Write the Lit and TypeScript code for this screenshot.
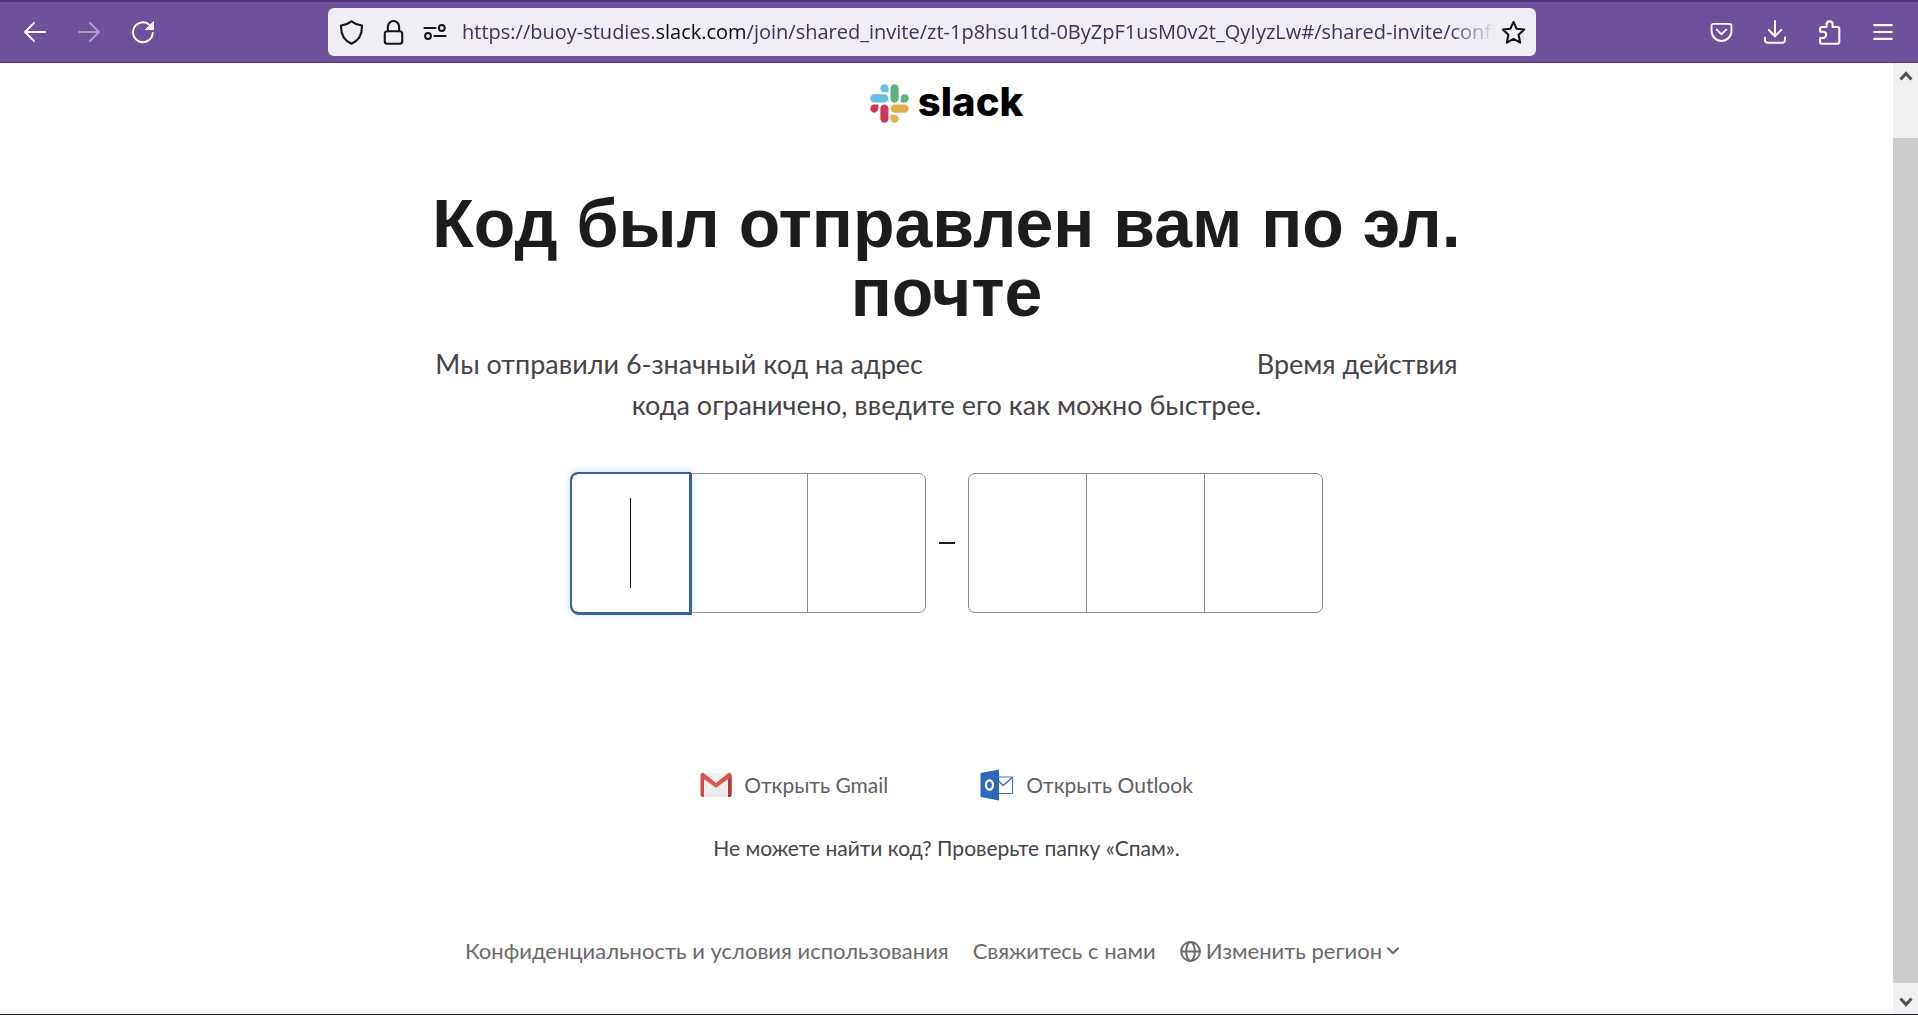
import { LitElement, html, css, svg } from "lit";
import { customElement } from "lit/decorators.js";

const icon = (size: number, body: unknown) => html`<svg
  width=${size}
  height=${size}
  viewBox="0 0 24 24"
  fill="none"
  stroke="currentColor"
  stroke-width="2"
  stroke-linecap="round"
  stroke-linejoin="round"
  aria-hidden="true"
>${body}</svg>`;

const icons = {
  back: svg`<path d="M22 12H2.500M11 3L2 12l9 9"/>`,
  forward: svg`<path d="M2 12h19.500M13 3l9 9-9 9"/>`,
  reload: svg`<path d="M21.800 13A9.900 9.900 0 1 1 18.600 4.900"/><path d="M22.500 2v7.500h-7.500z" fill="currentColor" stroke-width="1"/>`,
  shield: svg`<path d="M12 1.200C9.200 3.600 5.200 4.800 2 5.200C1.600 13 4.800 19.600 12 22.800C19.200 19.600 22.400 13 22 5.200C18.800 4.800 14.800 3.600 12 1.200z"/>`,
  lock: svg`<rect x="3.600" y="10.800" width="16.800" height="12" rx="2.400"/><path d="M6.600 10.800V6.400a5.400 5.400 0 0 1 10.800 0v4.400"/>`,
  sliders: svg`<path d="M1.500 8h11M11.500 16h11" stroke-width="2.200"/><circle cx="18.800" cy="8" r="2.900"/><circle cx="5" cy="16" r="2.900"/>`,
  star: svg`<path d="M12 1.800l3 6.600 7.300.8-5.400 5 1.500 7.600L12 18.200l-6.400 3.600 1.500-7.600-5.400-5 7.300-.8z"/>`,
  pocket: svg`<path d="M3.600 3h16.800a2 2 0 0 1 2 2v5.400a10.400 10.400 0 0 1-20.800 0V5a2 2 0 0 1 2-2z"/><path d="M7 9l5 4.800L17 9"/>`,
  download: svg`<path d="M12 1v15M5.800 10L12 16.200 18.200 10M2 17.500v2.700a2.500 2.500 0 0 0 2.500 2.500h15a2.500 2.500 0 0 0 2.500-2.500v-2.700"/>`,
  extension: svg`<path d="M3 11.200V8.300a1.600 1.600 0 0 1 1.600-1.600h4.600V4.200a2.900 2.900 0 0 1 5.800 0v2.500h4.800a1.600 1.600 0 0 1 1.600 1.600v12.900a1.600 1.600 0 0 1-1.600 1.600H4.600A1.600 1.600 0 0 1 3 21.200v-4h2.800a2.900 2.900 0 0 0 0-6z"/>`,
  menu: svg`<path d="M2.500 4.500h19M2.500 12h19M2.500 19.500h19" stroke-width="2.200"/>`,
};

@customElement("browser-toolbar")
class BrowserToolbar extends LitElement {
  static styles = css`
    :host { display: block; font-family: "Open Sans", "Noto Sans", sans-serif; }
    .bar {
      display: grid; grid-template-columns: minmax(0, 328fr) minmax(0, 1208fr) minmax(0, 382fr); align-items: center;
      height: 63px; box-sizing: border-box; color: #fff; background: #6d519b;
      border-top: 2px solid #4f3477; border-bottom: 1px solid #4f3a70;
    }
    .group { display: flex; align-items: center; gap: 22px; padding-left: 19px; }
    .end { justify-content: flex-end; padding: 0 19px 0 0; }
    button {
      display: flex; align-items: center; justify-content: center; width: 32px; height: 32px;
      padding: 0; border: 0; background: none; color: inherit;
    }
    button:disabled { opacity: 0.45; }
    .address {
      position: relative; display: flex; align-items: center; height: 48px;
      padding: 0 6px; border-radius: 6px; background: #f0edf5; color: #15141a;
    }
    .address button { flex: none; width: 34px; margin-right: 8px; }
    .address button:last-child { margin: 0; }
    .url {
      position: relative; flex: 1; min-width: 0; margin-left: 2px; overflow: hidden; white-space: nowrap;
      font-size: 20px; line-height: 34px; color: #3d3354;
      -webkit-mask-image: linear-gradient(to right, #000 calc(100% - 48px), transparent);
      mask-image: linear-gradient(to right, #000 calc(100% - 48px), transparent);
    }
    .domain { color: #0c0b12; }
    .url input { position: absolute; inset: 0; width: 100%; border: 0; outline: 0; background: transparent; font: inherit; }
  `;

  render() {
    return html`<nav class="bar" aria-label="Браузер">
      <div class="group">
        <button aria-label="Назад">${icon(24, icons.back)}</button>
        <button aria-label="Вперёд" disabled>${icon(24, icons.forward)}</button>
        <button aria-label="Обновить">${icon(24, icons.reload)}</button>
      </div>
      <div class="address">
        <button aria-label="Защита">${icon(25, icons.shield)}</button>
        <button aria-label="Соединение">${icon(25, icons.lock)}</button>
        <button aria-label="Разрешения">${icon(24, icons.sliders)}</button>
        <label class="url"><span>https://buoy-studies.</span><span class="domain">slack.com</span><span>/join/shared_invite/zt-1p8hsu1td-0ByZpF1usM0v2t_QyIyzLw#/shared-invite/confirm</span><input type="text" aria-label="Адрес" /></label>
        <button aria-label="Закладка">${icon(25, icons.star)}</button>
      </div>
      <div class="group end">
        <button aria-label="Pocket">${icon(23, icons.pocket)}</button>
        <button aria-label="Загрузки">${icon(24, icons.download)}</button>
        <button aria-label="Расширения">${icon(25, icons.extension)}</button>
        <button aria-label="Меню">${icon(22, icons.menu)}</button>
      </div>
    </nav>`;
  }
}

@customElement("code-input")
class CodeInput extends LitElement {
  static styles = css`
    :host { display: block; }
    .code { display: flex; justify-content: center; align-items: center; gap: 13px; margin: 0; padding: 0; border: 0; }
    .group {
      display: grid; grid-template-columns: repeat(3, 1fr); box-sizing: border-box; width: 355px;
      border: 1px solid #8a8a8d; border-radius: 7px;
    }
    .cell { position: relative; height: 138px; }
    .cell + .cell { border-left: 1px solid #8a8a8d; }
    input {
      display: block; box-sizing: border-box; width: 100%; height: 100%; padding: 0; border: 0; outline: 0;
      background: transparent; text-align: center; font: 60px "Lato", sans-serif; color: #1d1c1d; caret-color: transparent;
    }
    .active { z-index: 1; border-radius: 6px 0 0 6px; box-shadow: 0 0 0 2px #3a6292, 1px 1px 0 2px #3a6292, 0 0 10px 3px #d3e3fb; }
    .active::after {
      content: ""; position: absolute; left: 58px; top: 24px; bottom: 24px; width: 1px; background: #111; pointer-events: none;
    }
    .dash { width: 16px; height: 2px; background: #1d1c1d; }
  `;

  private cell(n: number) {
    return html`<div class=${n === 1 ? "cell active" : "cell"}>
      <input type="text" inputmode="numeric" maxlength="1" aria-label=${`Цифра ${n} из 6`} />
    </div>`;
  }

  render() {
    return html`<fieldset class="code" aria-label="Код подтверждения">
      <div class="group">${[1, 2, 3].map((n) => this.cell(n))}</div>
      <span class="dash"></span>
      <div class="group">${[4, 5, 6].map((n) => this.cell(n))}</div>
    </fieldset>`;
  }
}

@customElement("app-root")
class AppRoot extends LitElement {
  static styles = css`
    :host { display: block; font-family: "Lato", "Open Sans", sans-serif; color: #1d1c1d; }
    .window { display: flex; flex-direction: column; min-height: 100vh; box-sizing: border-box; border-bottom: 1px solid #1b1a1e; background: #fff; }
    .viewport { flex: 1; display: flex; }
    .page { flex: 1; min-width: 0; display: flex; flex-direction: column; align-items: center; padding: 21px 0 40px; box-sizing: border-box; }
    .logo { display: flex; align-items: flex-start; gap: 9px; height: 39px; color: #000; text-decoration: none; font: 800 40px/36px "Inter", sans-serif; }
    .intro { max-width: 1050px; margin-top: 66px; text-align: center; }
    h1 { margin: 0; font: bold 68px/69px "Liberation Sans", Arial, sans-serif; color: #1d1c1d; }
    .lead { margin: 16px 0 48px; font-size: 27px; line-height: 41px; color: #454447; }
    .recipient { display: inline-block; width: 320px; }
    .mail { display: flex; gap: 92px; margin-top: 156px; }
    .mail a { display: flex; align-items: center; gap: 12px; font-size: 21px; line-height: 30px; color: #616061; text-decoration: none; }
    .hint { margin: 32px 0 0; font-size: 21px; line-height: 30px; color: #454447; }
    .footer { display: flex; align-items: center; gap: 24px; margin-top: 73px; padding-right: 29px; font-size: 22px; line-height: 30px; }
    .footer a, .footer button { color: #696969; text-decoration: none; }
    .region { display: flex; align-items: center; gap: 5px; padding: 0; border: 0; background: none; font: inherit; }
    .scroll { width: 25px; display: flex; flex-direction: column; background: #f0f0f0; }
    .scroll button { display: flex; align-items: center; justify-content: center; height: 25px; padding: 0; border: 0; background: none; color: #505050; }
    .track { flex: 1; display: flex; flex-direction: column; padding-top: 50px; padding-bottom: 6px; }
    .thumb { flex: 1; background: #cdcdcd; }
  `;

  render() {
    return html`<div class="window">
      <browser-toolbar></browser-toolbar>
      <div class="viewport">
        <main class="page">
          <a class="logo" href="#">
            <svg width="39" height="39" viewBox="0 0 124 124" aria-hidden="true">
              <path fill="#c9385c" d="M26.400 78.200c0 7.100-5.800 12.900-12.900 12.900S.600 85.300.600 78.200s5.800-12.900 12.900-12.900h12.900zM32.900 78.200c0-7.100 5.800-12.900 12.900-12.900s12.900 5.800 12.900 12.900v32.300c0 7.100-5.800 12.900-12.900 12.900s-12.900-5.800-12.900-12.900z"/>
              <path fill="#67bee4" d="M45.800 26.400c-7.100 0-12.900-5.800-12.900-12.900S38.700.600 45.800.600s12.900 5.800 12.900 12.900v12.900zM45.800 32.900c7.100 0 12.900 5.800 12.900 12.900s-5.800 12.900-12.900 12.900H13.500C6.400 58.700.600 52.900.600 45.800s5.800-12.900 12.900-12.900z"/>
              <path fill="#5bb381" d="M97.600 45.800c0-7.100 5.800-12.900 12.900-12.900s12.900 5.800 12.900 12.900-5.800 12.900-12.900 12.900H97.600zM91.100 45.800c0 7.100-5.800 12.900-12.900 12.900s-12.900-5.800-12.900-12.900V13.500C65.300 6.400 71.100.600 78.200.600s12.900 5.800 12.900 12.900z"/>
              <path fill="#deb04c" d="M78.200 97.600c7.100 0 12.900 5.800 12.900 12.900s-5.800 12.900-12.900 12.900-12.900-5.800-12.900-12.900V97.600zM78.200 91.100c-7.100 0-12.900-5.800-12.900-12.900s5.800-12.900 12.900-12.900h32.300c7.100 0 12.900 5.800 12.900 12.900s-5.800 12.900-12.900 12.900z"/>
            </svg>
            <span>slack</span>
          </a>
          <div class="intro">
            <h1>Код был отправлен вам по эл. почте</h1>
            <p class="lead">Мы отправили 6-значный код на адрес <span class="recipient"></span> Время действия кода ограничено, введите его как можно быстрее.</p>
          </div>
          <code-input></code-input>
          <div class="mail">
            <a href="#">
              <svg width="32" height="30" viewBox="0 0 32 30" aria-hidden="true">
                <path d="M2 3h28v24H2z" fill="#f1f0f0"/>
                <path d="M4 7l12 10L28 7v20H4z" fill="#ededed"/>
                <path d="M.500 5v20a2 2 0 0 0 2 2H4V7zM31.500 5v20a2 2 0 0 1-2 2H28V7z" fill="#cf4b40"/>
                <path d="M28 7l3.500-2v20a2 2 0 0 1-2 2H28z" fill="#b63a31"/>
                <path d="M.500 5A2.200 2.200 0 0 1 4 3.300L16 13 28 3.300A2.200 2.200 0 0 1 31.500 5c0 1-.4 1.800-1.200 2.400L16 17.800 1.700 7.400C.9 6.800.5 6 .5 5z" fill="#dc5448"/>
              </svg>
              <span>Открыть Gmail</span>
            </a>
            <a href="#">
              <svg width="34" height="32" viewBox="0 0 34 32" aria-hidden="true">
                <path d="M18 8h14.500v16.500H18z" fill="#fff" stroke="#3f78bf" stroke-width="1.200"/>
                <path d="M18.500 12l4.700 4.500L32.200 8.500" fill="none" stroke="#3f78bf" stroke-width="1.500"/>
                <path d="M.500 4L19 .500v31L.500 28z" fill="#2d68bb"/>
                <ellipse cx="9.500" cy="16" rx="3.500" ry="4.700" fill="none" stroke="#fff" stroke-width="2.300"/>
              </svg>
              <span>Открыть Outlook</span>
            </a>
          </div>
          <p class="hint">Не можете найти код? Проверьте папку «Спам».</p>
          <footer class="footer">
            <a href="#">Конфиденциальность и условия использования</a>
            <a href="#">Свяжитесь с нами</a>
            <button class="region">
              <svg width="21" height="21" viewBox="0 0 21 21" fill="none" stroke="currentColor" stroke-width="2" aria-hidden="true">
                <circle cx="10.500" cy="10.500" r="9.400"/><ellipse cx="10.500" cy="10.500" rx="4.300" ry="9.400"/><path d="M1 10.500h19"/>
              </svg>
              <span>Изменить регион</span>
              <svg width="12" height="8" viewBox="0 0 12 8" fill="none" stroke="currentColor" stroke-width="2" stroke-linecap="round" stroke-linejoin="round" aria-hidden="true"><path d="M1 1.300l5 5 5-5"/></svg>
            </button>
          </footer>
        </main>
        <div class="scroll">
          <button aria-label="Прокрутить вверх"><svg width="14" height="10" viewBox="0 0 14 10" fill="none" stroke="currentColor" stroke-width="3" aria-hidden="true"><path d="M1.500 8.500L7 2.500l5.500 6"/></svg></button>
          <div class="track"><div class="thumb"></div></div>
          <button aria-label="Прокрутить вниз"><svg width="14" height="10" viewBox="0 0 14 10" fill="none" stroke="currentColor" stroke-width="3" aria-hidden="true"><path d="M1.500 1.500L7 7.500l5.500-6"/></svg></button>
        </div>
      </div>
    </div>`;
  }
}
